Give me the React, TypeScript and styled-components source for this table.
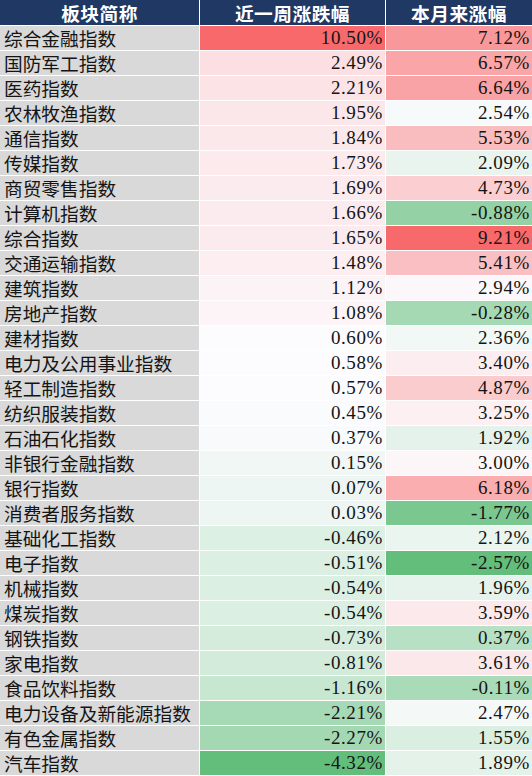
import { Fragment } from 'react';
import styled, { createGlobalStyle } from 'styled-components';

const GlobalStyle = createGlobalStyle`
  html, body {
    margin: 0;
    padding: 0;
    background: #ffffff;
  }
`;

type Row = {
  name: string;
  week: number;
  month: number;
};

const rows: Row[] = [
  { name: '综合金融指数', week: 10.5, month: 7.12 },
  { name: '国防军工指数', week: 2.49, month: 6.57 },
  { name: '医药指数', week: 2.21, month: 6.64 },
  { name: '农林牧渔指数', week: 1.95, month: 2.54 },
  { name: '通信指数', week: 1.84, month: 5.53 },
  { name: '传媒指数', week: 1.73, month: 2.09 },
  { name: '商贸零售指数', week: 1.69, month: 4.73 },
  { name: '计算机指数', week: 1.66, month: -0.88 },
  { name: '综合指数', week: 1.65, month: 9.21 },
  { name: '交通运输指数', week: 1.48, month: 5.41 },
  { name: '建筑指数', week: 1.12, month: 2.94 },
  { name: '房地产指数', week: 1.08, month: -0.28 },
  { name: '建材指数', week: 0.6, month: 2.36 },
  { name: '电力及公用事业指数', week: 0.58, month: 3.4 },
  { name: '轻工制造指数', week: 0.57, month: 4.87 },
  { name: '纺织服装指数', week: 0.45, month: 3.25 },
  { name: '石油石化指数', week: 0.37, month: 1.92 },
  { name: '非银行金融指数', week: 0.15, month: 3.0 },
  { name: '银行指数', week: 0.07, month: 6.18 },
  { name: '消费者服务指数', week: 0.03, month: -1.77 },
  { name: '基础化工指数', week: -0.46, month: 2.12 },
  { name: '电子指数', week: -0.51, month: -2.57 },
  { name: '机械指数', week: -0.54, month: 1.96 },
  { name: '煤炭指数', week: -0.54, month: 3.59 },
  { name: '钢铁指数', week: -0.73, month: 0.37 },
  { name: '家电指数', week: -0.81, month: 3.61 },
  { name: '食品饮料指数', week: -1.16, month: -0.11 },
  { name: '电力设备及新能源指数', week: -2.21, month: 2.47 },
  { name: '有色金属指数', week: -2.27, month: 1.55 },
  { name: '汽车指数', week: -4.32, month: 1.89 },
];

// excel style 3-colour scale: green (min) -> white (median) -> red (max)
const LOW = [99, 190, 123];
const MID = [252, 252, 255];
const HIGH = [248, 105, 107];

const median = (list: number[]) => {
  const s = [...list].sort((a, b) => a - b);
  const m = Math.floor(s.length / 2);
  return s.length % 2 ? s[m] : (s[m - 1] + s[m]) / 2;
};

const mix = (a: number[], b: number[], t: number) =>
  `rgb(${a.map((v, i) => Math.round(v + (b[i] - v) * t)).join(',')})`;

const makeScale = (list: number[]) => {
  const min = Math.min(...list);
  const max = Math.max(...list);
  const mid = median(list);
  return (v: number) =>
    v >= mid ? mix(MID, HIGH, (v - mid) / (max - mid || 1)) : mix(MID, LOW, (mid - v) / (mid - min || 1));
};

const weekColor = makeScale(rows.map(r => r.week));
const monthColor = makeScale(rows.map(r => r.month));

const Table = styled.div`
  display: grid;
  grid-template-columns: 199px 185px 146px;
  grid-template-rows: 25px;
  grid-auto-rows: 24px;
  column-gap: 1px;
  row-gap: 1px;
  width: 532px;
  background: #ffffff;
`;

const HeadCell = styled.div`
  display: flex;
  align-items: center;
  justify-content: center;
  background: #203864;
  color: #ffffff;
  font-family: 'Noto Sans CJK SC', sans-serif;
  font-weight: 700;
  font-size: 18.7px;
  letter-spacing: 0.5px;
  line-height: 25px;
`;

const NameCell = styled.div`
  display: flex;
  align-items: center;
  padding-left: 4px;
  background: #d9d9d9;
  color: #141414;
  font-family: 'Noto Sans CJK SC', sans-serif;
  font-size: 18.7px;
  line-height: 24px;
  white-space: nowrap;
`;

const ValueCell = styled.div`
  display: flex;
  align-items: center;
  justify-content: flex-end;
  padding-right: 2px;
  color: #141414;
  font-family: 'Liberation Serif', serif;
  font-size: 19px;
  line-height: 24px;
  letter-spacing: 0.6px;
`;

const fmt = (v: number) => `${v.toFixed(2)}%`;

export default function App() {
  return (
    <>
      <GlobalStyle />
      <Table>
        <HeadCell>板块简称</HeadCell>
        <HeadCell>近一周涨跌幅</HeadCell>
        <HeadCell>本月来涨幅</HeadCell>
        {rows.map(r => (
          <Fragment key={r.name}>
            <NameCell>{r.name}</NameCell>
            <ValueCell style={{ background: weekColor(r.week) }}>{fmt(r.week)}</ValueCell>
            <ValueCell style={{ background: monthColor(r.month) }}>{fmt(r.month)}</ValueCell>
          </Fragment>
        ))}
      </Table>
    </>
  );
}
